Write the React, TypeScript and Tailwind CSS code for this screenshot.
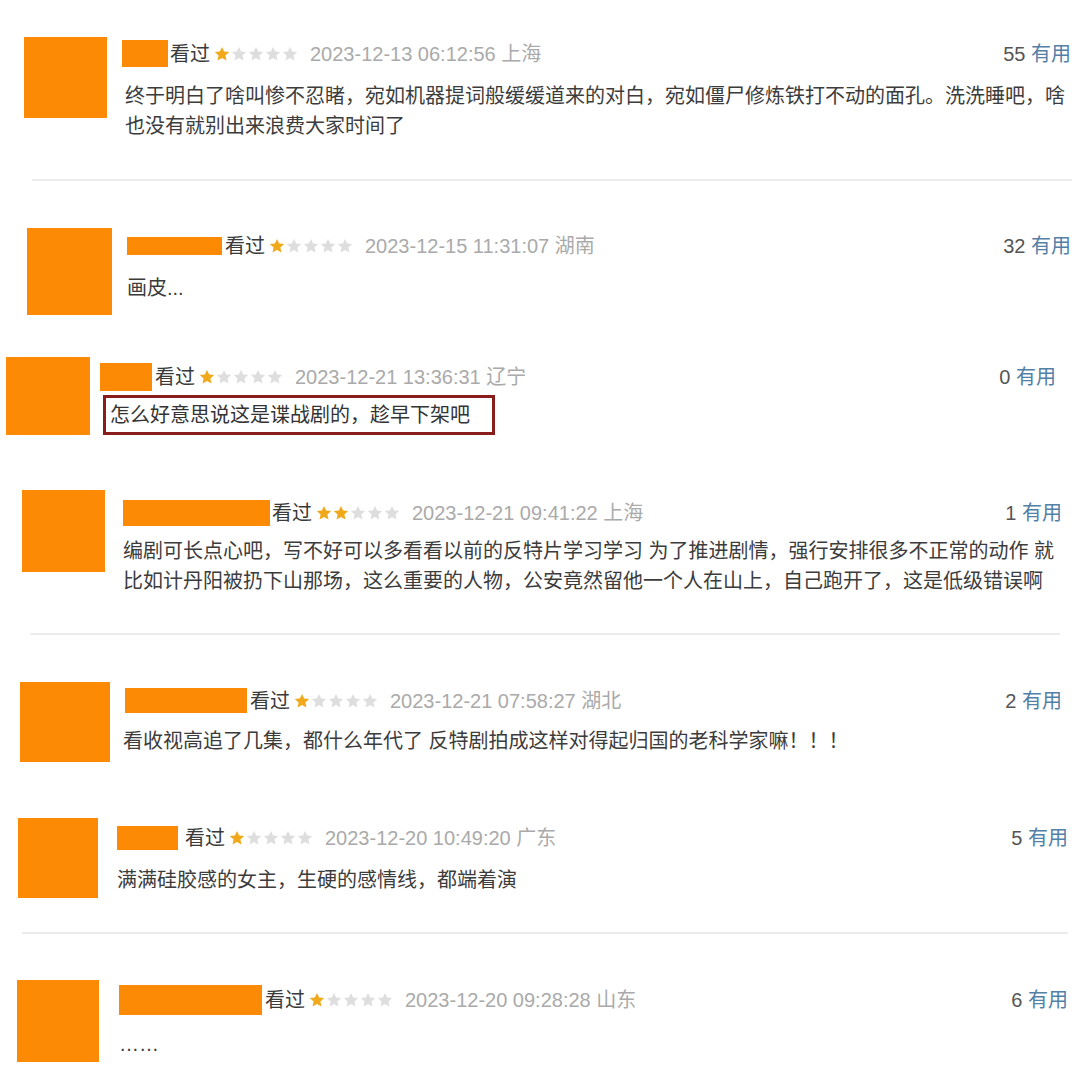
import React from "react";

type Row = {
  rowCls: string;
  avatarCls: string;
  colCls: string;
  hdrCls: string;
  nameCls: string;
  seenCls: string;
  stars: number;
  date: string;
  count: string;
  commentCls: string;
  lines: string[];
  boxed?: boolean;
  sepAfter?: string;
};

const rows: Row[] = [
  {
    rowCls: "h-[142px] pl-[24px]",
    avatarCls: "w-[83px] h-[81px]",
    colCls: "ml-[15px] mt-[3px] pr-[9px]",
    hdrCls: "h-[27px]",
    nameCls: "w-[46px] h-[27px]",
    seenCls: "ml-[2px]",
    stars: 1,
    date: "2023-12-13 06:12:56 上海",
    count: "55",
    commentCls: "mt-[14px] ml-[3px]",
    lines: [
      "终于明白了啥叫惨不忍睹，宛如机器提词般缓缓道来的对白，宛如僵尸修炼铁打不动的面孔。洗洗睡吧，啥",
      "也没有就别出来浪费大家时间了",
    ],
    sepAfter: "ml-[32px] mr-[8px] mb-[47px]",
  },
  {
    rowCls: "h-[129px] pl-[27px]",
    avatarCls: "w-[85px] h-[87px]",
    colCls: "ml-[15px] mt-[9px] pr-[9px]",
    hdrCls: "h-[18px]",
    nameCls: "w-[95px] h-[18px]",
    seenCls: "ml-[3px]",
    stars: 1,
    date: "2023-12-15 11:31:07 湖南",
    count: "32",
    commentCls: "mt-[18px]",
    lines: ["画皮..."],
  },
  {
    rowCls: "h-[133px] pl-[6px]",
    avatarCls: "w-[84px] h-[78px]",
    colCls: "ml-[10px] mt-[6px] pr-[24px]",
    hdrCls: "h-[28px]",
    nameCls: "w-[52px] h-[28px]",
    seenCls: "ml-[3px]",
    stars: 1,
    date: "2023-12-21 13:36:31 辽宁",
    count: "0",
    commentCls: "mt-[4px] ml-[3px]",
    lines: ["怎么好意思说这是谍战剧的，趁早下架吧"],
    boxed: true,
  },
  {
    rowCls: "h-[143px] pl-[22px]",
    avatarCls: "w-[83px] h-[82px]",
    colCls: "ml-[18px] mt-[10px] pr-[18px]",
    hdrCls: "h-[26px]",
    nameCls: "w-[147px] h-[26px]",
    seenCls: "ml-[2px]",
    stars: 2,
    date: "2023-12-21 09:41:22 上海",
    count: "1",
    commentCls: "mt-[10px]",
    lines: [
      "编剧可长点心吧，写不好可以多看看以前的反特片学习学习 为了推进剧情，强行安排很多不正常的动作 就",
      "比如计丹阳被扔下山那场，这么重要的人物，公安竟然留他一个人在山上，自己跑开了，这是低级错误啊",
    ],
    sepAfter: "ml-[30px] mr-[20px] mb-[47px]",
  },
  {
    rowCls: "h-[136px] pl-[20px]",
    avatarCls: "w-[90px] h-[80px]",
    colCls: "ml-[15px] mt-[6px] pr-[18px]",
    hdrCls: "h-[25px]",
    nameCls: "w-[122px] h-[25px]",
    seenCls: "ml-[3px]",
    stars: 1,
    date: "2023-12-21 07:58:27 湖北",
    count: "2",
    commentCls: "mt-[13px] -ml-[2px]",
    lines: ["看收视高追了几集，都什么年代了 反特剧拍成这样对得起归国的老科学家嘛！！！"],
  },
  {
    rowCls: "h-[114px] pl-[18px]",
    avatarCls: "w-[80px] h-[80px]",
    colCls: "ml-[19px] mt-[8px] pr-[12px]",
    hdrCls: "h-[24px]",
    nameCls: "w-[61px] h-[24px]",
    seenCls: "ml-[7px]",
    stars: 1,
    date: "2023-12-20 10:49:20 广东",
    count: "5",
    commentCls: "mt-[15px]",
    lines: ["满满硅胶感的女主，生硬的感情线，都端着演"],
    sepAfter: "ml-[22px] mr-[12px] mb-[46px]",
  },
  {
    rowCls: "h-[112px] pl-[17px]",
    avatarCls: "w-[82px] h-[82px]",
    colCls: "ml-[20px] mt-[5px] pr-[12px]",
    hdrCls: "h-[30px]",
    nameCls: "w-[143px] h-[30px]",
    seenCls: "ml-[3px]",
    stars: 1,
    date: "2023-12-20 09:28:28 山东",
    count: "6",
    commentCls: "mt-[14px]",
    lines: ["……"],
  },
];

function Stars({ n }: { n: number }) {
  return (
    <span className="ml-[4px] flex gap-[1px]">
      {[0, 1, 2, 3, 4].map((i) => (
        <svg key={i} width="16" height="16" viewBox="0 0 16 16">
          <polygon
            points="8,1 10.2,5.6 15.2,6.1 11.4,9.5 12.5,14.5 8,11.9 3.5,14.5 4.6,9.5 0.8,6.1 5.8,5.6"
            fill={i < n ? "#f1a91c" : "#dedede"}
          />
        </svg>
      ))}
    </span>
  );
}

function Comment({ row }: { row: Row }) {
  return (
    <>
      <div className={`flex ${row.rowCls}`}>
        <div className={`shrink-0 bg-[#fc8a04] ${row.avatarCls}`} />
        <div className={`flex-1 ${row.colCls}`}>
          <div className={`flex items-center ${row.hdrCls}`}>
            <div className={`shrink-0 bg-[#fc8a04] ${row.nameCls}`} />
            <span className={`whitespace-nowrap text-[#3a3a3a] ${row.seenCls}`}>看过</span>
            <Stars n={row.stars} />
            <span className="ml-[12px] whitespace-nowrap text-[#aaaaaa]">{row.date}</span>
            <span className="ml-auto whitespace-nowrap">
              <span className="text-[#555555]">{row.count} </span>
              <span className="text-[#5380a6]">有用</span>
            </span>
          </div>
          {row.boxed ? (
            <div
              className={`flex h-[40px] w-[392px] items-center border-[3px] border-[#8b1c1c] pl-[4px] text-[#333333] ${row.commentCls}`}
            >
              {row.lines[0]}
            </div>
          ) : (
            <div className={`text-[#3c3c3c] ${row.commentCls}`}>
              {row.lines.map((l) => (
                <div key={l} className="whitespace-nowrap">
                  {l}
                </div>
              ))}
            </div>
          )}
        </div>
      </div>
      {row.sepAfter && <div className={`h-[2px] bg-[#ececec] ${row.sepAfter}`} />}
    </>
  );
}

export default function App() {
  return (
    <div
      className="h-[1092px] w-[1080px] overflow-hidden bg-white pt-[37px] text-[20px] leading-[30px]"
      style={{ fontFamily: '"Liberation Sans", "Noto Sans CJK SC", sans-serif' }}
    >
      {rows.map((r) => (
        <Comment key={r.date} row={r} />
      ))}
    </div>
  );
}
